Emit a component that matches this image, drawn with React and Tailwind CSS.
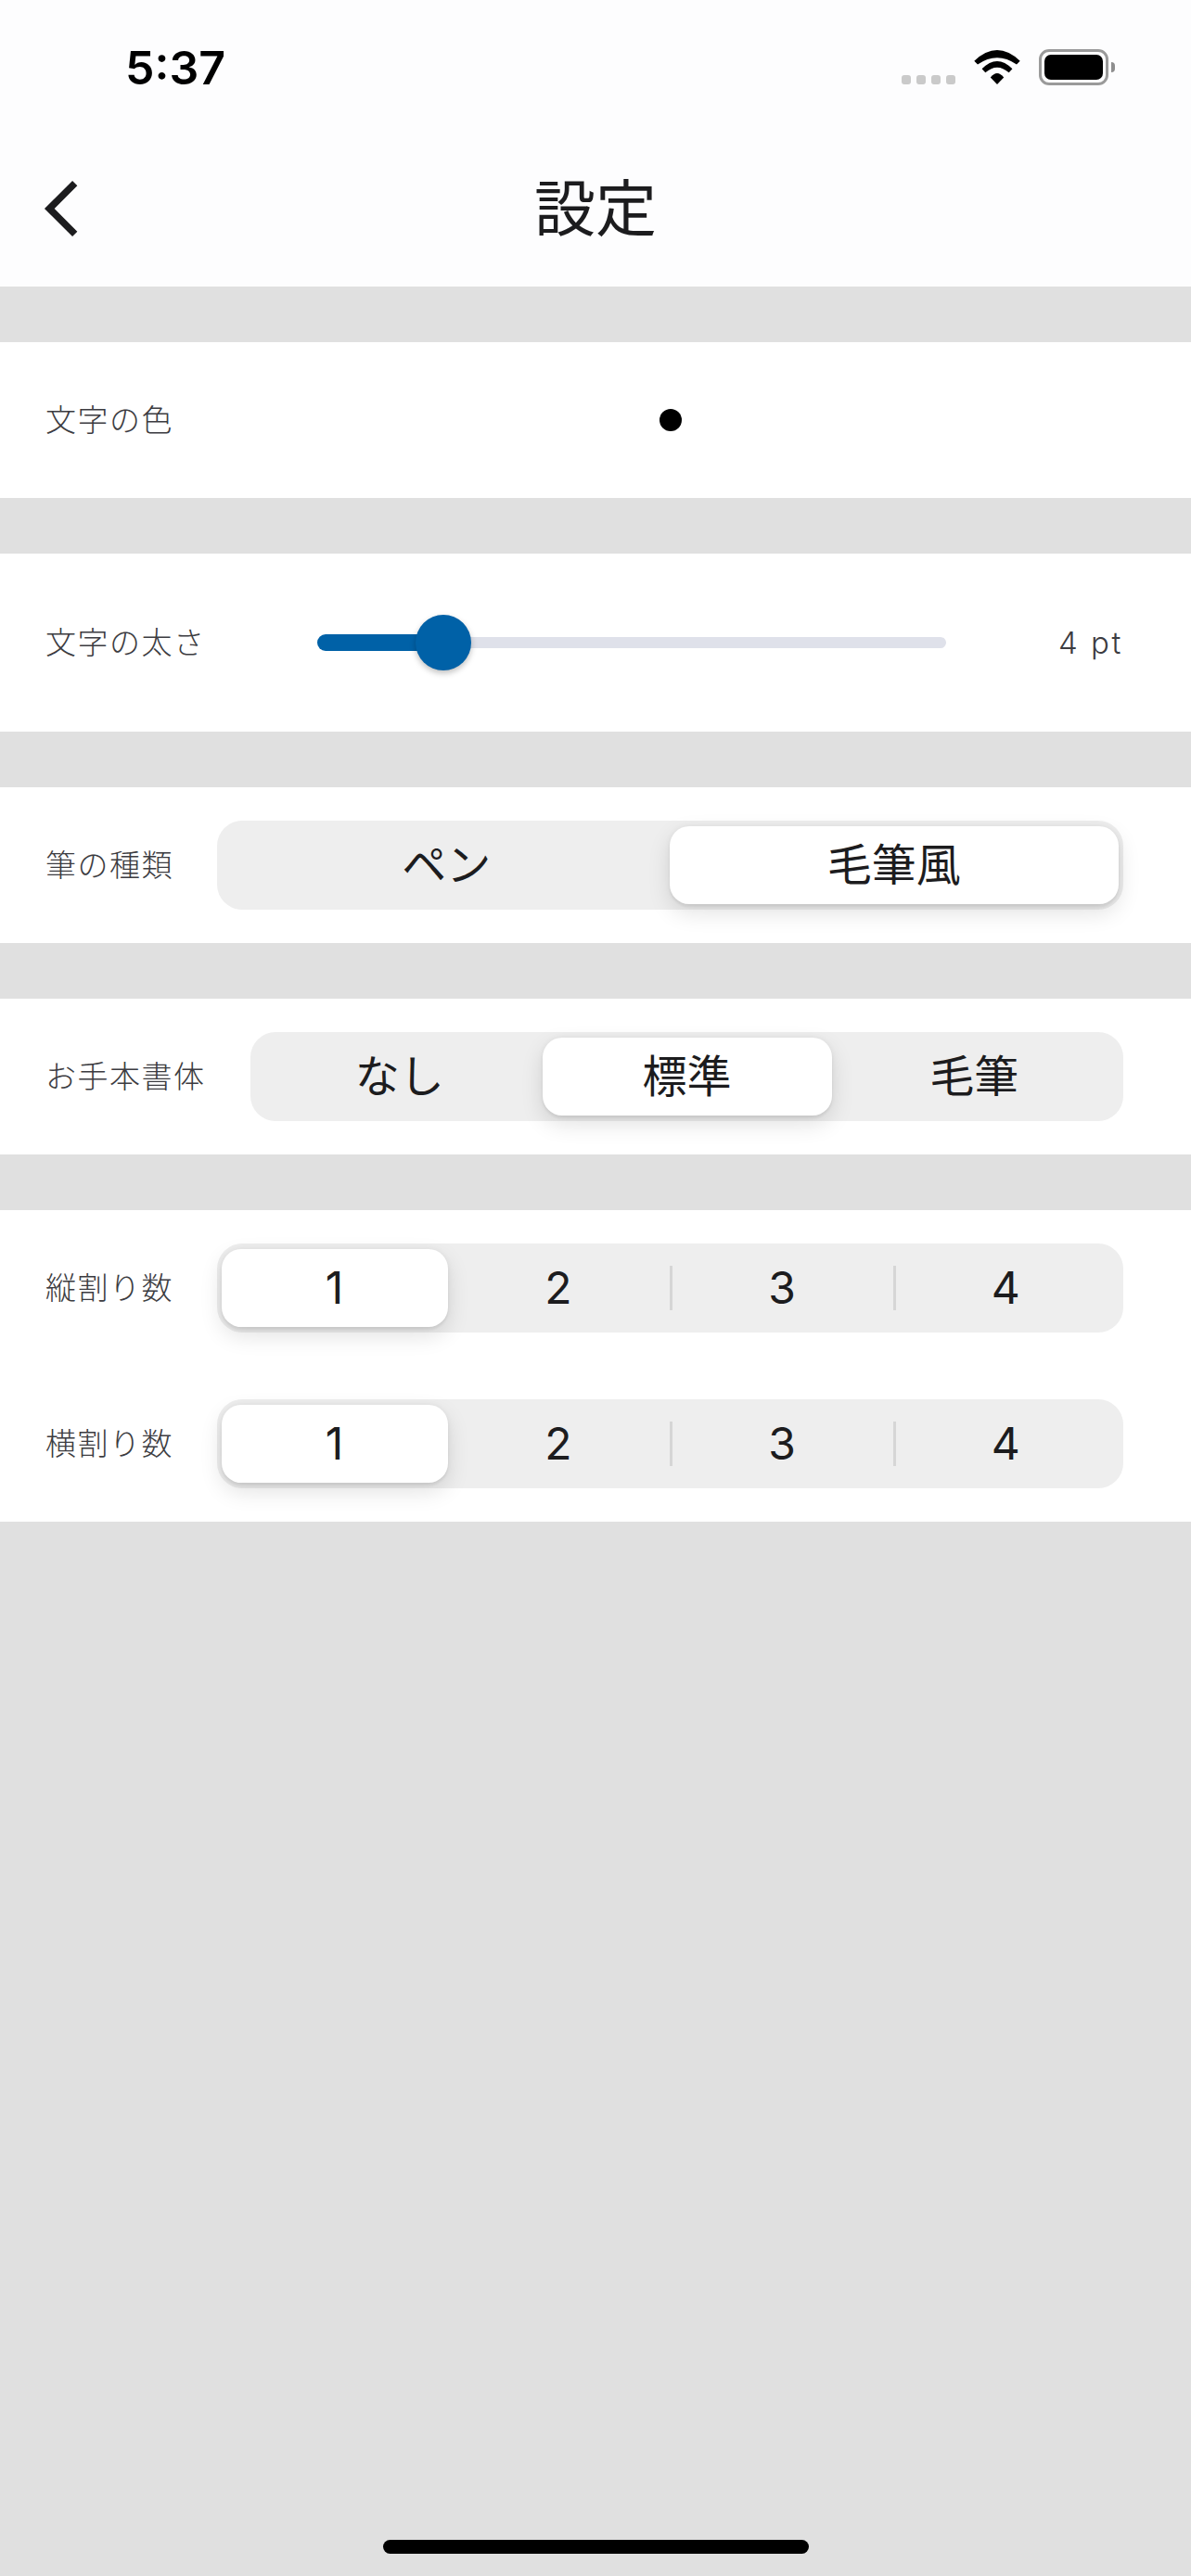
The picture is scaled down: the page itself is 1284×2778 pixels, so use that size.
const cjk = "font-['Inter','Noto_Sans_CJK_JP',sans-serif]";

function Row({ label, children, labelW = "w-[234px]" }) {
  return (
    <div className="flex items-center bg-white">
      <div className={`${labelW} shrink-0 pl-[49px] text-[33px] font-light leading-[40px] tracking-[1.5px] text-[#3c3c41]`}>{label}</div>
      {children}
    </div>
  );
}

function Segmented({ items, selected, dividers = [] }) {
  return (
    <div className="mr-[73px] flex h-[96px] flex-1 rounded-[27px] bg-[#eeeeee] p-[6px]">
      {items.map((t, i) => (
        <div key={t} className="relative flex flex-1 items-center justify-center text-[48px] leading-[84px] text-[#1c1c1e]">
          {i === selected && (
            <div className={`absolute inset-y-0 -left-[1px] ${i === items.length - 1 ? "-right-[1px]" : "-right-[2px]"} rounded-[21px] bg-white shadow-[0_9px_24px_rgba(0,0,0,0.12),0_3px_3px_rgba(0,0,0,0.05),0_0_6px_rgba(0,0,0,0.05)]`} />
          )}
          {dividers.includes(i) && (
            <div className="absolute -left-[1px] top-[18px] h-[48px] w-[3px] bg-[#d6d6d6]" />
          )}
          <span className="relative">{t}</span>
        </div>
      ))}
    </div>
  );
}

function Wifi() {
  return (
    <svg width="50" height="37" viewBox="0 0 49.4 37" fill="#000" className="mb-[1px]">
      <path d="M0 11.7Q24.7-11.7 49.4 11.7L45.7 15.6Q24.7 1 3.7 15.6Z" />
      <path d="M8.3 20.3Q24.7 3.7 41.1 20.3L37.4 24.3Q24.7 13 12 24.3Z" />
      <path d="M17.5 29.5Q24.7 20.5 31.9 29.5L24.7 37Z" />
    </svg>
  );
}

export default function App() {
  return (
    <div className={`flex h-[2778px] w-[1284px] flex-col overflow-hidden bg-[#e0e0e0] ${cjk}`}>
      <div className="flex h-[132px] items-start justify-between bg-[#fdfdfe]">
        <div className="ml-[135px] mt-[48px] text-[50px] font-semibold leading-[50px] text-black">5:37</div>
        <div className="mr-[82px] mt-[53px] flex items-end">
          <div className="mb-[1px] mr-[20px] flex gap-[6px]">
            <div className="h-[10px] w-[10px] rounded-[3px] bg-[#cacaca]" />
            <div className="h-[10px] w-[10px] rounded-[3px] bg-[#cacaca]" />
            <div className="h-[10px] w-[10px] rounded-[3px] bg-[#cacaca]" />
            <div className="h-[10px] w-[10px] rounded-[3px] bg-[#cacaca]" />
          </div>
          <Wifi />
          <div className="ml-[20px] flex items-center">
            <div className="h-[39px] w-[75px] rounded-[11px] border-[3px] border-[#9a9a9a] p-[3px]">
              <div className="h-full w-full rounded-[7px] bg-black" />
            </div>
            <div className="ml-[3px] h-[11px] w-[4px] rounded-r-[4px] bg-[#8e8e8e]" />
          </div>
        </div>
      </div>

      <div className="mb-[60px] grid h-[177px] grid-cols-[1fr_auto_1fr] items-center bg-[#fdfdfe] pb-[15px] pt-[24px]">
        <svg width="40" height="66" viewBox="0 0 40 66" fill="none" stroke="#1c1c1e" strokeWidth="7.5" className="ml-[46px]">
          <polyline points="34.7,5.7 7.3,33 34.7,60.3" />
        </svg>
        <div className="text-[66px] leading-[80px] text-[#1c1c1e]">設定</div>
        <div />
      </div>

      <div className="flex flex-col gap-[60px]">
        <Row label="文字の色">
          <div className="flex h-[168px] items-center">
            <div className="ml-[477px] h-[24px] w-[24px] rounded-full bg-black" />
          </div>
        </Row>

        <div className="flex h-[192px] items-center bg-white">
          <div className="w-[342px] shrink-0 pl-[49px] text-[33px] font-light leading-[40px] tracking-[1.5px] text-[#3c3c41]">文字の太さ</div>
          <div className="relative flex h-[18px] w-[678px] items-center">
            <div className="h-[18px] w-[120px] rounded-l-[9px] bg-[#0061a7]" />
            <div className="h-[12px] flex-1 rounded-r-[6px] bg-[#dfe1ea]" />
            <div className="absolute left-[106px] top-[-21px] h-[60px] w-[60px] rounded-full bg-[#0061a7] shadow-[0_3px_6px_rgba(0,0,0,0.25)]" />
          </div>
          <div className="ml-[121px] text-[33px] font-light leading-[40px] tracking-[2.5px] text-[#3c3c41]">4 pt</div>
        </div>

        <Row label="筆の種類">
          <div className="flex h-[168px] flex-1 items-center">
            <Segmented items={["ペン", "毛筆風"]} selected={1} />
          </div>
        </Row>

        <Row label="お手本書体" labelW="w-[270px]">
          <div className="flex h-[168px] flex-1 items-center">
            <Segmented items={["なし", "標準", "毛筆"]} selected={1} />
          </div>
        </Row>

        <div className="flex flex-col bg-white">
          <Row label="縦割り数">
            <div className="flex h-[168px] flex-1 items-center">
              <Segmented items={["1", "2", "3", "4"]} selected={0} dividers={[2, 3]} />
            </div>
          </Row>
          <Row label="横割り数">
            <div className="flex h-[168px] flex-1 items-center">
              <Segmented items={["1", "2", "3", "4"]} selected={0} dividers={[2, 3]} />
            </div>
          </Row>
        </div>
      </div>

      <div className="mb-[24px] mt-auto h-[15px] w-[459px] self-center rounded-[8px] bg-black" />
    </div>
  );
}
